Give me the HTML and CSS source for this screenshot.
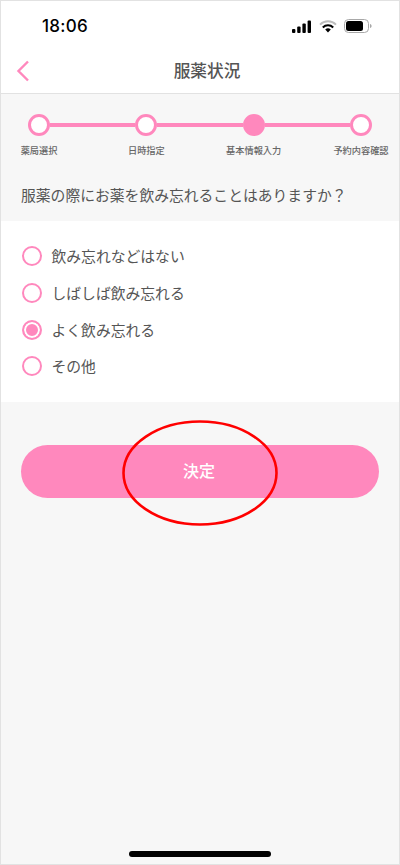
FILE: index.html
```html
<!DOCTYPE html>
<html lang="ja">
<head>
<meta charset="utf-8">
<title>服薬状況</title>
<link rel="stylesheet" href="styles.css">
</head>
<body>
<div class="frame">
  <header class="top">
    <div class="status">
      <span class="time">18:06</span>
      <div class="status-icons">
        <svg width="20" height="13" viewBox="0 0 20 13"><rect x="0" y="9" width="3.4" height="4" rx="1"/><rect x="5.2" y="6.5" width="3.4" height="6.5" rx="1"/><rect x="10.4" y="3.5" width="3.4" height="9.5" rx="1"/><rect x="15.6" y="0.5" width="3.4" height="12.5" rx="1"/></svg>
        <svg width="18" height="13" viewBox="0 0 18 13"><path d="M1 4.6a11.5 11.5 0 0 1 16 0" fill="none" stroke="#bdbdbd" stroke-width="2"/><path d="M3.8 7.5a7.4 7.4 0 0 1 10.4 0" fill="none" stroke="#000" stroke-width="2"/><path d="M9 12.5 6.2 9.6a4 4 0 0 1 5.6 0z"/></svg>
        <svg width="28" height="14" viewBox="0 0 28 14"><rect x="0.5" y="0.5" width="24" height="13" rx="4" fill="none" stroke="#a8a8a8"/><rect x="2" y="2" width="17" height="10" rx="2.5"/><path d="M26 5v4c1-.3 1.6-1.1 1.6-2S27 5.300 26 5z" fill="#a8a8a8"/></svg>
      </div>
    </div>
    <div class="nav">
      <svg class="back" width="14" height="22" viewBox="0 0 14 22"><path d="M12 1.500 2.500 11 12 20.500" fill="none" stroke="#ff88bd" stroke-width="2.400"/></svg>
      <h1 class="title">服薬状況</h1>
    </div>
  </header>

  <main class="content">
    <div class="stepper">
      <div class="step"><span class="dot"></span><span class="label">薬局選択</span></div>
      <span class="link"></span>
      <div class="step"><span class="dot"></span><span class="label">日時指定</span></div>
      <span class="link"></span>
      <div class="step"><span class="dot dot-on"></span><span class="label">基本情報入力</span></div>
      <span class="link"></span>
      <div class="step"><span class="dot"></span><span class="label">予約内容確認</span></div>
    </div>

    <p class="question">服薬の際にお薬を飲み忘れることはありますか？</p>

    <section class="options">
      <div class="option"><span class="radio"></span><span>飲み忘れなどはない</span></div>
      <div class="option"><span class="radio"></span><span>しばしば飲み忘れる</span></div>
      <div class="option"><span class="radio radio-on"></span><span>よく飲み忘れる</span></div>
      <div class="option"><span class="radio"></span><span>その他</span></div>
    </section>

    <div class="action">
      <button class="submit" type="button">決定</button>
      <svg class="mark" width="160" height="110" viewBox="0 0 160 110"><ellipse cx="80" cy="55" rx="76.500" ry="51.500" fill="none" stroke="#f00" stroke-width="2.600"/></svg>
    </div>
  </main>

  <div class="home"></div>
</div>
</body>
</html>
```
FILE: styles.css
```css
* { box-sizing: border-box; }
html, body { margin: 0; padding: 0; }
body {
  width: 400px;
  height: 865px;
  overflow: hidden;
  font-family: "Noto Sans CJK JP", "Noto Sans", sans-serif;
  color: #555;
}
.frame {
  width: 400px;
  height: 865px;
  border: 1px solid #e2e2e2;
  background: #f7f7f7;
  display: flex;
  flex-direction: column;
}
.top {
  height: 93px;
  flex: none;
  background: #fff;
  border-bottom: 1px solid #e2e2e2;
}
.status {
  height: 49px;
  padding: 0 27px 0 41px;
  display: flex;
  align-items: center;
  justify-content: space-between;
}
.time {
  font-family: Inter, "Liberation Sans", sans-serif;
  font-size: 17px;
  font-weight: 500;
  color: #000;
  letter-spacing: 0.3px;
}
.status-icons { display: flex; align-items: center; gap: 7px; margin-top: 1px; }
.status-icons svg { display: block; }
.nav {
  height: 43px;
  padding: 0 0 2px 14px;
  position: relative;
  display: flex;
  align-items: center;
  justify-content: center;
}
.back { position: absolute; left: 15px; top: 10px; }
.title {
  margin: 0;
  font-size: 16.700px;
  font-weight: 500;
  color: #555;
  line-height: 1;
}
.content { flex: 1; display: flex; flex-direction: column; }
.stepper {
  display: flex;
  align-items: flex-start;
  padding: 20px 27px 0 27px;
}
.step {
  width: 22px;
  flex: none;
  display: flex;
  flex-direction: column;
  align-items: center;
}
.dot {
  width: 22px;
  height: 22px;
  flex: none;
  border-radius: 50%;
  border: 3px solid #ff88bd;
  background: #fff;
}
.dot-on { background: #ff88bd; }
.link {
  flex: 1;
  height: 4px;
  margin-top: 9px;
  background: #ff88bd;
}
.label {
  margin-top: 7px;
  font-size: 9.200px;
  font-weight: 500;
  line-height: 14px;
  white-space: nowrap;
  color: #666;
}
.question {
  margin: 0;
  padding: 27px 20px 0;
  height: 64px;
  font-size: 14.800px;
  line-height: 22px;
  color: #555;
  font-weight: 400;
  white-space: nowrap;
}
.options {
  height: 181px;
  background: #fff;
  padding: 17px 21px 0;
  display: flex;
  flex-direction: column;
}
.option {
  height: 36.670px;
  flex: none;
  display: flex;
  align-items: center;
  gap: 9.500px;
  font-size: 14.800px;
  font-weight: 400;
  color: #555;
}
.option span:last-child { margin-top: -1px; }
.radio {
  width: 20px;
  height: 20px;
  flex: none;
  border-radius: 50%;
  border: 2px solid #ff88bd;
  background: #fff;
}
.radio-on {
  background: #ff88bd;
  box-shadow: inset 0 0 0 2px #fff;
}
.action {
  position: relative;
  padding: 43px 20px 0;
}
.submit {
  display: block;
  width: 358px;
  height: 53px;
  border: 0;
  padding: 0 2px 3px 0;
  border-radius: 27px;
  background: #ff88bd;
  color: #fff;
  font-family: inherit;
  font-size: 16px;
  font-weight: 500;
}
.mark { position: absolute; left: 119px; top: 16px; }
.home {
  position: absolute;
  left: 129px;
  top: 851px;
  width: 142px;
  height: 6px;
  border-radius: 3px;
  background: #000;
}
```
